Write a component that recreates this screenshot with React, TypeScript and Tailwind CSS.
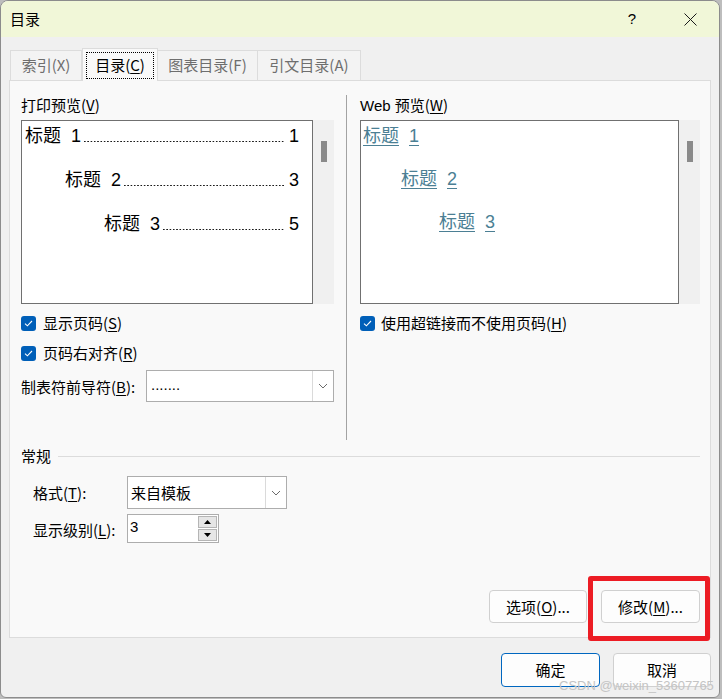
import React from "react";

const CJK = "font-['Noto_Sans_CJK_SC',sans-serif]";

function U({ c }: { c: string }) {
  return <span className="underline underline-offset-[2px] decoration-[1px]">{c}</span>;
}

function Check() {
  return (
    <div className="w-[15px] h-[15px] rounded-[3px] bg-[#005fb8] flex items-center justify-center shrink-0">
      <svg width="9" height="7" viewBox="0 0 9 7" fill="none">
        <path d="M1 3.6 L3.4 5.8 L8 1" stroke="white" strokeWidth="1.1" />
      </svg>
    </div>
  );
}

function Chevron() {
  return (
    <svg width="10" height="6" viewBox="0 0 10 6" fill="none">
      <path d="M1 1 L5 5 L9 1" stroke="#6b6b6b" strokeWidth="1" />
    </svg>
  );
}

function Dots() {
  return (
    <div className="flex-1 min-w-0 ml-[3px] h-[1.5px] bg-[linear-gradient(to_right,#1a1a1a_1.3px,transparent_1.3px)] bg-[length:3.3px_1.5px] bg-repeat-x" />
  );
}

function PrintRow({ n, p, pl }: { n: string; p: string; pl: string }) {
  return (
    <div className={`flex items-baseline h-[26px] leading-[26px] text-[18px] text-black pr-[13px] ${pl}`}>
      <span className={CJK}>标题</span>
      <span className="ml-[10px] font-['Liberation_Sans',sans-serif]">{n}</span>
      <Dots />
      <span className="ml-[4px] font-['Liberation_Sans',sans-serif]">{p}</span>
    </div>
  );
}

function WebRow({ n, cls }: { n: string; cls: string }) {
  return (
    <div className={`h-[26px] leading-[26px] text-[18px] ${cls}`}>
      <span className="text-[#4b7f94] underline underline-offset-[3px] decoration-[1px] decoration-[#4b7f94]">
        <span className={CJK}>标题</span>
        <span className="ml-[10px] font-['Liberation_Sans',sans-serif]">{n}</span>
      </span>
    </div>
  );
}

function Scrollbar() {
  return (
    <div className="w-[21px] h-[184px] bg-[#f0f0f0] pt-[21px] pl-[8px]">
      <div className="w-[6px] h-[21px] bg-[#8a8a8a]" />
    </div>
  );
}

export default function App() {
  return (
    <div className={`relative w-[722px] h-[699px] bg-[#bdbdbd] ${CJK} text-[15px] text-black`}>
      <div className="w-[720px] h-[698px] border border-[#8c8c8c] rounded-t-[8px] rounded-b-[6px] overflow-hidden bg-[#f0f0f0] flex flex-col">
        {/* Title bar */}
        <div className="h-[36px] bg-[#f1f7d8] flex items-center pl-[9px] shrink-0">
          <span className="text-[15px] leading-[20px]">目录</span>
          <div className="ml-auto flex items-center">
            <div className="w-[58px] h-[36px] flex items-center justify-center text-[15px] font-['Liberation_Sans',sans-serif]">?</div>
            <div className="w-[58px] h-[36px] flex items-center justify-center">
              <svg width="13" height="13" viewBox="0 0 13 13" fill="none">
                <path d="M0.5 0.5 L12.5 12.5 M12.5 0.5 L0.5 12.5" stroke="#1a1a1a" strokeWidth="1" />
              </svg>
            </div>
          </div>
        </div>

        {/* Body */}
        <div className="flex-1 px-[8px] flex flex-col">
          {/* Tabs */}
          <div className="h-[44px] pt-[11px] flex items-end ml-[1px] -mb-px relative z-10">
            <div className="w-[72px] h-[31px] border border-[#dcdcdc] bg-[#f3f3f3] text-[#6e6e6e] flex items-center justify-center">索引(X)</div>
            <div className="w-[76px] h-[33px] border border-b-0 border-[#dcdcdc] bg-[#f9f9f9] flex items-center justify-center pt-[1px]">
              <div className="border border-dotted border-black w-[68px] h-[27px] flex items-center justify-center">
                <span>目录(<U c="C" />)</span>
              </div>
            </div>
            <div className="w-[100px] h-[31px] border border-l-0 border-[#dcdcdc] bg-[#f3f3f3] text-[#6e6e6e] flex items-center justify-center">图表目录(F)</div>
            <div className="w-[103px] h-[31px] border border-l-0 border-[#dcdcdc] bg-[#f3f3f3] text-[#6e6e6e] flex items-center justify-center">引文目录(A)</div>
          </div>

          {/* Panel */}
          <div className="relative h-[558px] border border-[#dcdcdc] bg-[#f9f9f9] flex flex-col">
            {/* Top section */}
            <div className="flex items-start pl-[11px] pt-[14px]">
              {/* Left column */}
              <div className="w-[313px] flex flex-col">
                <div className="h-[20px] leading-[20px]">打印预览(<U c="V" />)</div>
                <div className="mt-[5px] flex">
                  <div className="w-[292px] h-[184px] border border-[#707070] bg-white flex flex-col gap-[18px]">
                    <PrintRow n="1" p="1" pl="pl-[3px]" />
                    <PrintRow n="2" p="3" pl="pl-[43px]" />
                    <PrintRow n="3" p="5" pl="pl-[82px]" />
                  </div>
                  <Scrollbar />
                </div>
                <div className="mt-[9px] h-[20px] flex items-center gap-[7px]">
                  <Check />
                  <span className="leading-[20px]">显示页码(<U c="S" />)</span>
                </div>
                <div className="mt-[10px] h-[20px] flex items-center gap-[7px]">
                  <Check />
                  <span className="leading-[20px]">页码右对齐(<U c="R" />)</span>
                </div>
                <div className="mt-[7px] flex items-center">
                  <span className="w-[125px] leading-[20px] pt-[2px] whitespace-nowrap">制表符前导符(<U c="B" />):</span>
                  <div className="w-[188px] h-[32px] border border-[#adadad] bg-white flex">
                    <div className="flex-1 pl-[4px] leading-[28px] font-['Liberation_Sans',sans-serif] text-[15px]">.......</div>
                    <div className="w-[21px] border-l border-[#dadada] flex items-center justify-center">
                      <Chevron />
                    </div>
                  </div>
                </div>
              </div>

              {/* Separator */}
              <div className="ml-[12px] w-px h-[345px] bg-[#a3a3a3]" />

              {/* Right column */}
              <div className="ml-[13px] w-[340px] flex flex-col">
                <div className="h-[20px] leading-[20px]">
                  <span className="font-['Liberation_Sans',sans-serif] text-[15px]">Web </span>预览(<U c="W" />)
                </div>
                <div className="mt-[5px] flex">
                  <div className="w-[319px] h-[184px] border border-[#707070] bg-white flex flex-col">
                    <WebRow n="1" cls="pl-[2px]" />
                    <WebRow n="2" cls="pl-[40px] mt-[17px]" />
                    <WebRow n="3" cls="pl-[78px] mt-[17px]" />
                  </div>
                  <Scrollbar />
                </div>
                <div className="mt-[9px] h-[20px] flex items-center gap-[6px]">
                  <Check />
                  <span className="leading-[20px]">使用超链接而不使用页码(<U c="H" />)</span>
                </div>
              </div>
            </div>

            {/* 常规 */}
            <div className="mt-[6px] h-[20px] flex items-center pl-[11px] pr-[10px]">
              <span className="leading-[20px]">常规</span>
              <div className="ml-[7px] flex-1 h-px bg-[#dcdcdc]" />
            </div>

            <div className="mt-[10px] flex items-center pl-[23px]">
              <span className="w-[94px] leading-[20px]">格式(<U c="T" />):</span>
              <div className="w-[160px] h-[33px] border border-[#adadad] bg-white flex">
                <div className="flex-1 pl-[3px] leading-[31px]">来自模板</div>
                <div className="w-[21px] border-l border-[#dadada] flex items-center justify-center">
                  <Chevron />
                </div>
              </div>
            </div>

            <div className="mt-[5px] flex items-center pl-[23px]">
              <span className="w-[94px] leading-[20px] pt-[2px] whitespace-nowrap">显示级别(<U c="L" />):</span>
              <div className="w-[92px] h-[29px] border border-[#adadad] bg-white flex">
                <div className="flex-1 pl-[2px] leading-[24px] font-['Liberation_Sans',sans-serif] text-[15px]">3</div>
                <div className="w-[20px] flex flex-col gap-[1px] py-[1px] pr-[1px]">
                  <div className="flex-1 bg-[#e6e6e6] border border-[#b5b5b5] flex items-center justify-center">
                    <svg width="7" height="4" viewBox="0 0 7 4"><path d="M0 4 L3.5 0 L7 4 Z" fill="#000" /></svg>
                  </div>
                  <div className="flex-1 bg-[#e6e6e6] border border-[#b5b5b5] flex items-center justify-center">
                    <svg width="7" height="4" viewBox="0 0 7 4"><path d="M0 0 L3.5 4 L7 0 Z" fill="#000" /></svg>
                  </div>
                </div>
              </div>
            </div>

            <div className="mt-[47px] flex justify-end gap-[14px] pr-[10px]">
              <button className="w-[98px] h-[33px] rounded-[4px] border border-[#d0d0d0] bg-[#fdfdfd] leading-[20px]">
                选项(<U c="O" />)...
              </button>
              <button className="w-[99px] h-[33px] rounded-[4px] border border-[#d0d0d0] bg-[#fdfdfd] leading-[20px]">
                修改(<U c="M" />)...
              </button>
            </div>
          </div>

          {/* Bottom buttons */}
          <div className="mt-[15px] flex justify-end gap-[13px]">
            <button className="w-[99px] h-[34px] rounded-[4px] border border-[#0067c0] bg-[#fdfdfd] leading-[20px]">确定</button>
            <button className="w-[98px] h-[34px] rounded-[4px] border border-[#d0d0d0] bg-[#fdfdfd] leading-[20px]">取消</button>
          </div>
        </div>
      </div>

      {/* Red annotation box */}
      <div className="absolute left-[588px] top-[576px] w-[122px] h-[65px] border-[5px] border-[#ec1c24] rounded-[3px]" />

      {/* Watermark */}
      <div className="absolute left-[559px] top-[678px] text-[13px] leading-[16px] text-[#c4c4c4] font-['Liberation_Sans',sans-serif]">
        CSDN @weixin_53607765
      </div>
    </div>
  );
}
